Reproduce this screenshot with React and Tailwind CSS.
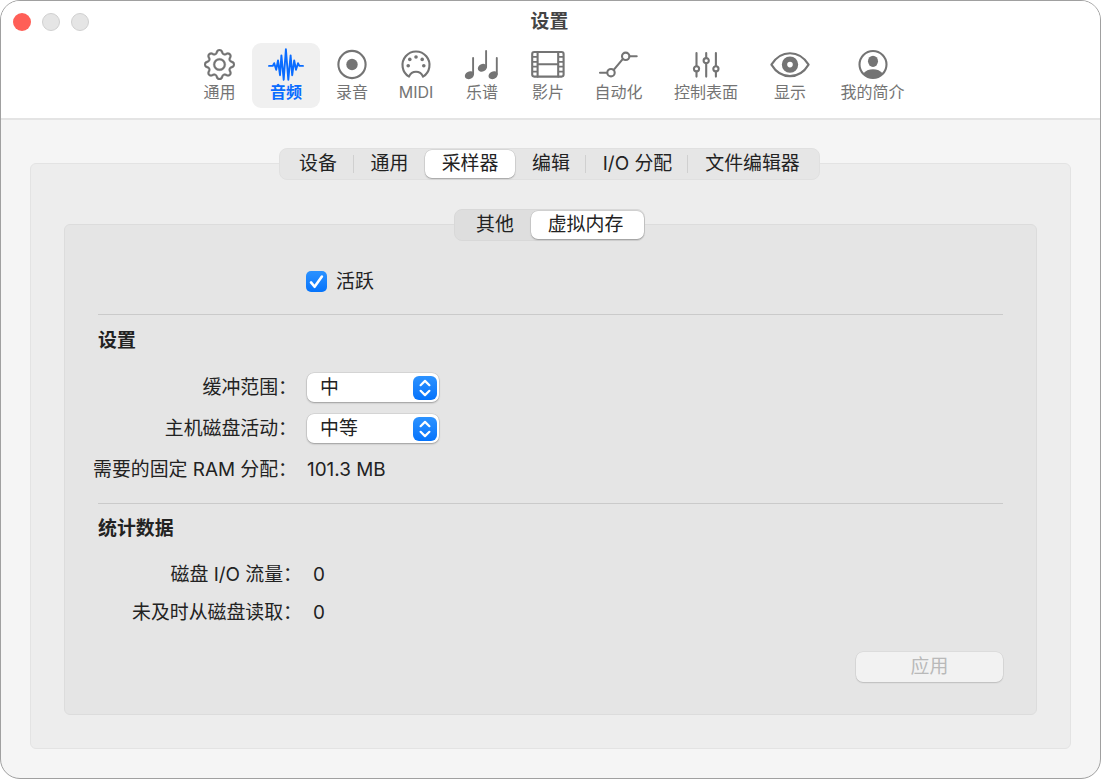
import React from "react";
import { BsGear } from "react-icons/bs";

function Glyph({ children }) {
  return (
    <svg
      viewBox="-22 -18 44 36"
      className="h-[36px] w-[44px] shrink-0"
      fill="none"
      stroke="currentColor"
      strokeWidth="2.1"
      strokeLinecap="round"
      strokeLinejoin="round"
    >
      {children}
    </svg>
  );
}

const WaveIcon = () => (
  <Glyph>
    <path
      strokeWidth="1.9"
      d="M-17 .9H-13.2L-11.8-1.8L-9.8 4.8L-8-4.6L-6 10.2L-4.6-9.6L-2.3 14.8L-.1-15.8L2.3 14.8L4.6-9.6L6.2 10.2L8.2-4.6L10 4.8L12-1.8L13.4 .9H17"
    />
  </Glyph>
);

const RecordIcon = () => (
  <Glyph>
    <circle cx="0" cy="-.5" r="13.6" />
    <circle cx="0" cy="-.5" r="5.7" fill="currentColor" stroke="none" />
  </Glyph>
);

const MidiIcon = () => (
  <Glyph>
    <path d="M-7 11.6A13.5 13.5 0 1 1 7 11.6C5.4 8 3 6.8 0 6.8S-5.4 8-7 11.6Z" />
    <g fill="currentColor" stroke="none">
      <circle cx="0" cy="-8" r="1.8" />
      <circle cx="-6.2" cy="-5.6" r="1.8" />
      <circle cx="6.2" cy="-5.6" r="1.8" />
      <circle cx="-7.8" cy=".7" r="1.8" />
      <circle cx="7.8" cy=".7" r="1.8" />
    </g>
  </Glyph>
);

const NotesIcon = () => (
  <Glyph>
    <path strokeWidth="1.9" d="M-8.9-7V9M4.1-14V2M14.8-7V9" />
    <g fill="currentColor" stroke="none">
      <ellipse cx="-12.6" cy="10.2" rx="4.8" ry="3.7" transform="rotate(-28 -12.6 10.2)" />
      <ellipse cx=".4" cy="2.8" rx="4.8" ry="3.7" transform="rotate(-28 .4 2.8)" />
      <ellipse cx="11.1" cy="10.2" rx="4.8" ry="3.7" transform="rotate(-28 11.1 10.2)" />
    </g>
  </Glyph>
);

const FilmIcon = () => (
  <Glyph>
    <rect x="-15.8" y="-13" width="31.4" height="24.6" rx="2" />
    <path d="M-10.4-13V11.6M10.2-13V11.6M-10.4-.7H10.2" />
    <path
      strokeWidth="1.7"
      strokeLinecap="butt"
      d="M-15-8.1H-10.4M-15-3.2H-10.4M-15 1.7H-10.4M-15 6.6H-10.4M10.2-8.1H15M10.2-3.2H15M10.2 1.7H15M10.2 6.6H15"
    />
  </Glyph>
);

const AutomationIcon = () => (
  <Glyph>
    <path d="M-19 7.7H-12M-5.3 4.9L3.7-5.9M10.6-8.7H17.7" />
    <circle cx="-8" cy="7.7" r="3.7" />
    <circle cx="6.7" cy="-8.7" r="3.7" />
  </Glyph>
);

const SlidersIcon = () => (
  <Glyph>
    <path d="M-9.5-12V1M-9.5 6.6V11.6M.2-12V-7M.2-1.6V11.6M9.9-12V1M9.9 6.6V11.6" />
    <circle cx="-9.5" cy="3.8" r="2.6" />
    <circle cx=".2" cy="-4.3" r="2.6" />
    <circle cx="9.9" cy="3.8" r="2.6" />
  </Glyph>
);

const EyeIcon = () => (
  <Glyph>
    <path d="M-18.6-.4C-14-7.6-7.4-11.7 0-11.7S14-7.6 18.6-.4C14 7.2 7.4 11.1 0 11.1S-14 7.2-18.6-.4Z" />
    <circle cx="0" cy="-.4" r="5.5" strokeWidth="5.4" />
  </Glyph>
);

const PersonIcon = () => (
  <Glyph>
    <circle cx="0" cy="-.5" r="13.5" />
    <g fill="currentColor" stroke="none">
      <ellipse cx="0" cy="-3.7" rx="5" ry="5.6" />
      <path d="M-9.8 8.6C-7.5 5.7-4 4.2 0 4.2S7.5 5.7 9.8 8.6A13.5 13.5 0 0 1-9.8 8.6Z" />
    </g>
  </Glyph>
);

const GearIcon = () => (
  <span className="flex h-[36px] items-center">
    <BsGear className="mb-[1px] size-[31px]" stroke="currentColor" strokeWidth="0.15" />
  </span>
);

const tools = [
  { label: "通用", Icon: GearIcon, width: "w-[65px]" },
  { label: "音频", Icon: WaveIcon, width: "w-[68px]", active: true },
  { label: "录音", Icon: RecordIcon, width: "w-[64px]" },
  { label: "MIDI", Icon: MidiIcon, width: "w-[64px]" },
  { label: "乐谱", Icon: NotesIcon, width: "w-[68px]" },
  { label: "影片", Icon: FilmIcon, width: "w-[64px]" },
  { label: "自动化", Icon: AutomationIcon, width: "w-[77px]" },
  { label: "控制表面", Icon: SlidersIcon, width: "w-[98px]" },
  { label: "显示", Icon: EyeIcon, width: "w-[70px]" },
  { label: "我的简介", Icon: PersonIcon, width: "w-[95px]" },
];

function ToolButton({ label, Icon, width, active }) {
  return (
    <button
      className={`flex h-[65px] flex-col items-center rounded-[9px] pt-[4px] text-[16px] leading-[18px] ${width} ${
        active ? "bg-[#f0f0f0] font-bold text-[#0a6cff]" : "text-[#747474]"
      }`}
    >
      <Icon />
      <span className="whitespace-nowrap">{label}</span>
    </button>
  );
}

function Segment({ label, width, active, divider }) {
  return (
    <div
      className={`flex items-center justify-center whitespace-nowrap ${width} ${
        active
          ? "my-[1px] rounded-[7px] bg-white shadow-[0_0_0_0.5px_rgba(0,0,0,0.12),0_1px_1.5px_rgba(0,0,0,0.25)]"
          : ""
      }`}
    >
      <span className="flex-1 text-center leading-[28px]">{label}</span>
      {divider && <span className="h-[18px] w-px bg-[#d0d0d0]" />}
    </div>
  );
}

function Row({ label, children, height = "h-[41px]", labelWidth = "w-[232px]", gap = "gap-[10px]" }) {
  return (
    <div className={`flex items-center ${height} ${gap}`}>
      <span className={`flex shrink-0 justify-end pt-[2px] whitespace-nowrap ${labelWidth}`}>{label}</span>
      {children}
    </div>
  );
}

function Select({ value }) {
  return (
    <button className="flex h-[29px] w-[132px] items-center justify-between rounded-[7px] bg-white pr-[2.5px] pl-[13px] shadow-[0_0_0_0.5px_rgba(0,0,0,0.12),0_1px_2px_rgba(0,0,0,0.28)]">
      <span className="leading-[27px]">{value}</span>
      <span className="flex size-[24px] items-center justify-center rounded-[6px] bg-linear-to-b from-[#2b92ff] to-[#0473fb]">
        <svg
          viewBox="0 0 24 24"
          className="size-[24px]"
          fill="none"
          stroke="white"
          strokeWidth="2.2"
          strokeLinecap="round"
          strokeLinejoin="round"
        >
          <path d="M7.6 9.2L12 4.9L16.4 9.2M7.6 14.8L12 19.1L16.4 14.8" />
        </svg>
      </span>
    </button>
  );
}

function Rule({ className }) {
  return <div className={`mr-[33px] ml-[33px] h-px bg-[#cacaca] ${className}`} />;
}

export default function App() {
  return (
    <div className="h-[779px] w-[1101px] bg-white font-[Inter,'Noto_Sans_CJK_SC',sans-serif] text-[18.9px] text-[#222]">
      <div className="flex h-full flex-col overflow-hidden rounded-[20px] border border-[#a0a0a0] bg-[#f5f5f5]">
        <header className="h-[119px] shrink-0 border-b-2 border-[#e4e4e4] bg-white">
          <div className="flex h-[41px] items-center">
            <div className="flex w-[200px] gap-[11px] pl-[12px]">
              <span className="size-[18px] rounded-full bg-[#ff5f57]" />
              <span className="size-[18px] rounded-full border border-[#d0d0d0] bg-[#e5e5e5]" />
              <span className="size-[18px] rounded-full border border-[#d0d0d0] bg-[#e5e5e5]" />
            </div>
            <h1 className="flex-1 pt-[2px] pr-[202px] text-center font-bold text-[#444]">设置</h1>
          </div>
          <nav className="mt-[1px] flex pl-[186px]">
            {tools.map((tool) => (
              <ToolButton key={tool.label} {...tool} />
            ))}
          </nav>
        </header>

        <main className="mx-[29px] mt-[43px] flex h-[586px] flex-col rounded-[6px] border border-[#e3e3e3] bg-[#ededed]">
          <div className="-mt-[16px] ml-[248px] flex h-[32px] w-[541px] rounded-[8px] border border-[#e0e0e0] bg-[#e6e6e6]">
            <Segment label="设备" width="w-[74px] pl-[3px]" divider />
            <Segment label="通用" width="w-[71px]" />
            <Segment label="采样器" width="w-[90px]" active />
            <Segment label="编辑" width="w-[71px] pl-[2px]" divider />
            <Segment label="I/O 分配" width="w-[102px] pl-[2px]" divider />
            <Segment label="文件编辑器" width="w-[131px] pr-[2px]" />
          </div>

          <section className="mx-[33px] mt-[44px] h-[491px] rounded-[6px] border border-[#dcdcdc] bg-[#e5e5e5]">
            <div className="-mt-[16px] ml-[389px] flex h-[32px] w-[191px] rounded-[8px] border border-[#d8d8d8] bg-[#dedede]">
              <Segment label="其他" width="w-[76px] pl-[4px]" />
              <Segment label="虚拟内存" width="w-[113px] pr-[4px]" active />
            </div>

            <div className="mt-[20px] flex h-[40px] items-center gap-[9px] pl-[241px]">
              <span className="flex size-[21px] items-center justify-center rounded-[5px] bg-linear-to-b from-[#2b92ff] to-[#0473fb]">
                <svg
                  viewBox="0 0 21 21"
                  className="size-[21px]"
                  fill="none"
                  stroke="white"
                  strokeWidth="2.6"
                  strokeLinecap="round"
                  strokeLinejoin="round"
                >
                  <path d="M5 11.4L8.6 15.8L15.9 5.6" />
                </svg>
              </span>
              <span className="pt-[2px]">活跃</span>
            </div>

            <Rule className="mt-[13px]" />
            <h2 className="mt-[12px] pl-[33px] leading-[28px] font-bold">设置</h2>
            <div className="mt-[12px]">
              <Row label="缓冲范围：">
                <Select value="中" />
              </Row>
              <Row label="主机磁盘活动：">
                <Select value="中等" />
              </Row>
              <Row label="需要的固定 RAM 分配：">
                <span className="pt-[2px]">101.3 MB</span>
              </Row>
            </div>

            <Rule className="mt-[13px]" />
            <h2 className="mt-[11px] pl-[33px] leading-[28px] font-bold">统计数据</h2>
            <div className="mt-[12px]">
              <Row label="磁盘 I/O 流量：" height="h-[38px]" labelWidth="w-[237px]" gap="gap-[11px]">
                <span className="pt-[2px]">0</span>
              </Row>
              <Row label="未及时从磁盘读取：" height="h-[38px]" labelWidth="w-[237px]" gap="gap-[11px]">
                <span className="pt-[2px]">0</span>
              </Row>
            </div>

            <div className="mt-[21px] flex justify-end pr-[33px]">
              <button className="flex h-[30px] w-[147px] items-center justify-center rounded-[7px] bg-[#f2f2f2] leading-[28px] text-[#b9b9b9] shadow-[0_0_0_0.5px_rgba(0,0,0,0.08),0_1px_1.5px_rgba(0,0,0,0.14)]">
                应用
              </button>
            </div>
          </section>
        </main>
      </div>
    </div>
  );
}
